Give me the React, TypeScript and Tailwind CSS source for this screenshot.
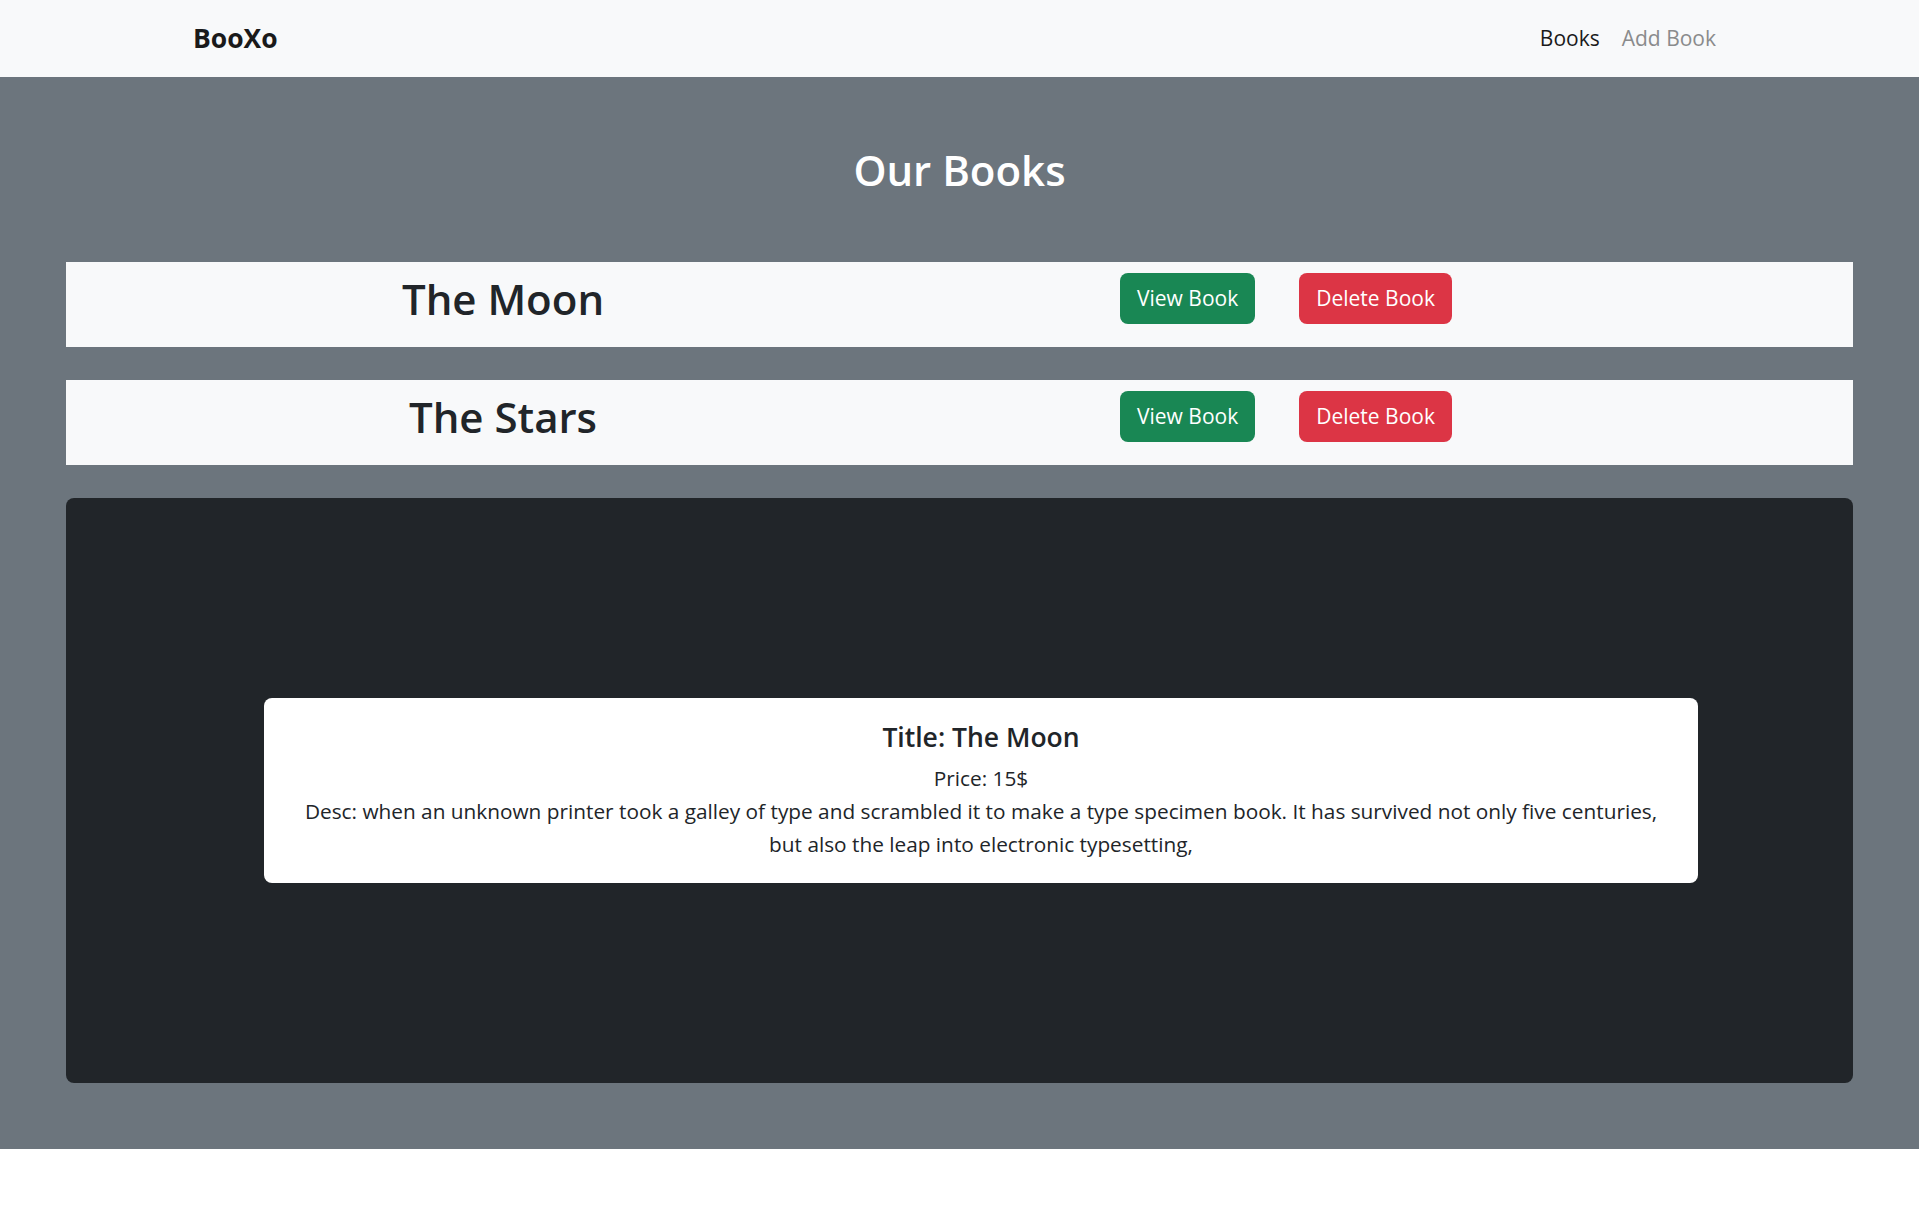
const books = [
  { id: 1, title: 'The Moon' },
  { id: 2, title: 'The Stars' },
];

const selected = {
  title: 'The Moon',
  price: 15,
  desc: 'when an unknown printer took a galley of type and scrambled it to make a type specimen book. It has survived not only five centuries,',
  descRest: 'but also the leap into electronic typesetting,',
};

function BookRow({ title }: { title: string }) {
  return (
    <div className="flex items-start h-[85px] bg-[#f8f9fa] pt-[11px]">
      <h2 className="w-[874px] text-center text-[42px] font-semibold leading-[54px] text-[#212529] mt-[-1px]">
        {title}
      </h2>
      <button
        type="button"
        className="ml-[180px] h-[51px] px-[17px] rounded-[8px] bg-[#198754] text-white text-[21px]"
      >
        View Book
      </button>
      <button
        type="button"
        className="ml-[44px] h-[51px] px-[17px] rounded-[8px] bg-[#dc3545] text-white text-[21px]"
      >
        Delete Book
      </button>
    </div>
  );
}

export default function App() {
  return (
    <div className="min-h-screen bg-white font-['Open_Sans',sans-serif] text-[#212529]">
      <nav className="h-[77px] bg-[#f8f9fa] flex items-center justify-between px-[192px]">
        <span className="text-[26.5px] font-bold text-[#1a1a1a] ml-[1px]">BooXo</span>
        <div className="flex items-center text-[21px]">
          <a className="px-[11px] text-[#1a1a1a]">Books</a>
          <a className="px-[11px] text-[#8a8b8c]">Add Book</a>
        </div>
      </nav>

      <section className="bg-[#6c757d] px-[66px] pt-[63px] pb-[66px]">
        <h1 className="text-center text-white text-[42px] font-semibold leading-[60px] mb-[62px]">
          Our Books
        </h1>

        <div className="flex flex-col gap-[33px]">
          {books.map((b) => (
            <BookRow key={b.id} title={b.title} />
          ))}

          <div className="h-[585px] rounded-[8px] bg-[#212529] flex items-center pl-[198px] pr-[155px]">
            <div className="flex-1 bg-white rounded-[8px] px-[22px] pt-[24px] pb-[22px] text-center">
              <h5 className="text-[26.5px] font-semibold leading-[1.2] mb-[9px]">
                Title: {selected.title}
              </h5>
              <p className="text-[20.8px] leading-[33px]">Price: {selected.price}$</p>
              <p className="text-[20.8px] leading-[33px]">
                Desc: {selected.desc}
                <br />
                {selected.descRest}
              </p>
            </div>
          </div>
        </div>
      </section>
    </div>
  );
}
